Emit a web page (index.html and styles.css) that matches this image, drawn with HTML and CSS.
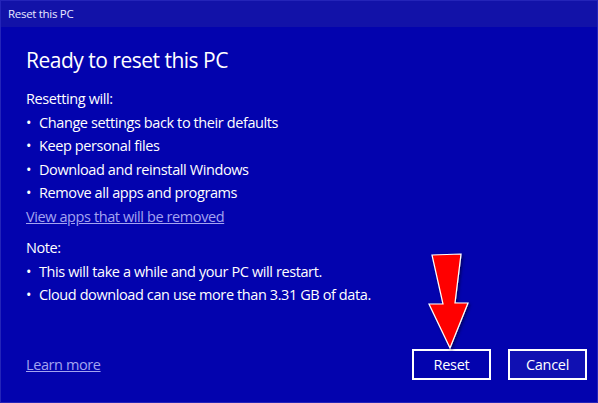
FILE: index.html
```html
<!DOCTYPE html>
<html lang="en">

<head>
    <meta charset="UTF-8">
    <title>Reset this PC</title>
    <link rel="stylesheet" href="styles.css">
</head>

<body>
    <div class="window">
        <div class="titleBar">Reset this PC</div>
        <div class="content">
            <h1 class="heading">Ready to reset this PC</h1>
            <p class="label">Resetting will:</p>
            <ul class="list">
                <li>Change settings back to their defaults</li>
                <li>Keep personal files</li>
                <li>Download and reinstall Windows</li>
                <li>Remove all apps and programs</li>
            </ul>
            <a class="link" href="#">View apps that will be removed</a>
            <p class="label note">Note:</p>
            <ul class="list">
                <li>This will take a while and your PC will restart.</li>
                <li>Cloud download can use more than 3.31 GB of data.</li>
            </ul>
        </div>
        <div class="footer">
            <a class="link" href="#">Learn more</a>
            <div class="buttons">
                <button class="btn">Reset</button>
                <button class="btn cancel">Cancel</button>
            </div>
        </div>

        <svg class="arrow" width="50" height="100" viewBox="0 0 50 100">
            <defs>
                <filter id="shadow" x="-30%" y="-30%" width="160%" height="160%">
                    <feDropShadow dx="1.5" dy="1.5" stdDeviation="1.5" flood-color="#000040" flood-opacity="0.7" />
                </filter>
            </defs>
            <polygon points="6,4 35,3 29,52 42,52 24,97 3,53 17,53" fill="#ff0000" stroke="#ffffff" stroke-width="1.2" stroke-linejoin="miter" filter="url(#shadow)" />
        </svg>
    </div>
</body>

</html>
```

FILE: styles.css
```css
body {
    margin: 0;
    font-family: "Open Sans", "Noto Sans", sans-serif;
    background-color: #0303ae;
    color: #ffffff;
}

.window {
    position: relative;
    width: 598px;
    height: 403px;
    box-sizing: border-box;
    border: 1px solid #2424b8;
    background-color: #0303ae;
    display: flex;
    flex-direction: column;
}

.titleBar {
    height: 26px;
    background-color: #1212a8;
    font-size: 11.5px;
    letter-spacing: -0.3px;
    line-height: 26px;
    padding-left: 7px;
    color: #e8e8ff;
}

.content {
    padding: 18px 25px 0;
    flex: 1;
}

.heading {
    font-weight: normal;
    font-size: 21px;
    margin: 0 0 12px;
    line-height: 30px;
    letter-spacing: -0.5px;
}

.label,
.list li,
.link {
    font-size: 14.5px;
    letter-spacing: -0.4px;
    line-height: 23.5px;
}

.label {
    margin: 0;
}

.note {
    margin-top: 8px;
}

.list {
    margin: 0;
    padding: 0;
    list-style: none;
}

.list li {
    position: relative;
    padding-left: 13px;
}

.list li::before {
    content: "\2022";
    position: absolute;
    left: 0;
}

.link {
    display: inline-block;
    color: #a4a4f0;
    text-decoration: underline;
}

.footer {
    display: flex;
    justify-content: space-between;
    align-items: center;
    padding: 0 10px 22px 25px;
}

.buttons {
    display: flex;
    gap: 17px;
}

.btn {
    width: 79px;
    height: 31px;
    box-sizing: border-box;
    border: 2px solid #ffffff;
    background-color: #0303ae;
    color: #ffffff;
    font-family: "Open Sans", "Noto Sans", sans-serif;
    font-size: 14.5px;
    letter-spacing: -0.3px;
    padding: 0;
}

.cancel {
    background-color: #1010b2;
}

.arrow {
    position: absolute;
    left: 425px;
    top: 250px;
}
```
